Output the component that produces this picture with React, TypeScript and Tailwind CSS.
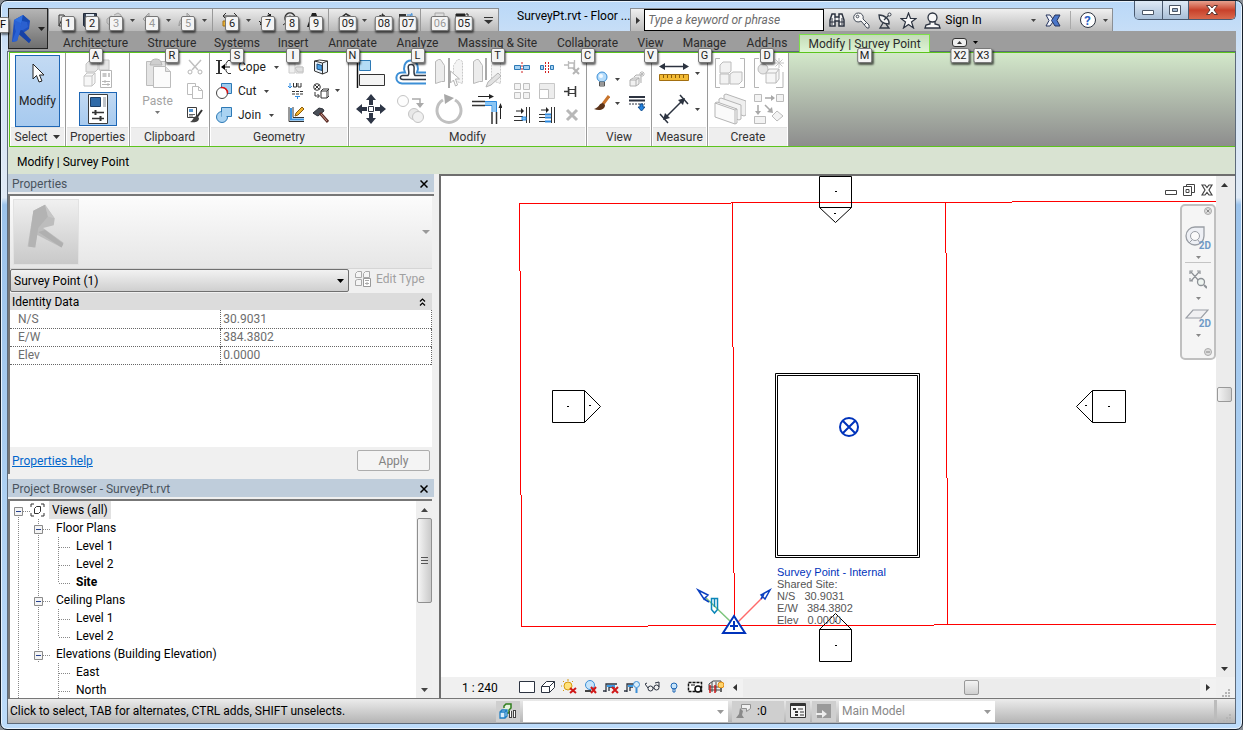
import type { ReactNode } from "react";
import clsx from "clsx";

type IconProps = { w?: number; h?: number; className?: string; children: ReactNode };

function Svg({ w = 16, h = 16, className, children }: IconProps) {
    return (
        <svg width={w} height={h} viewBox={`0 0 ${w} ${h}`} fill="none" aria-hidden="true" className={clsx("shrink-0", className)}>
            {children}
        </svg>
    );
}

function Caret({ className = "text-[#444]" }: { className?: string }) {
    return (
        <Svg w={5} h={3} className={className}>
            <path d="M0 0h5L2.500 3z" fill="currentColor" />
        </Svg>
    );
}

function KeyTip({ label, muted, className }: { label: string; muted?: boolean; className: string }) {
    return (
        <span
            className={clsx(
                "absolute z-30 flex h-[15px] min-w-[14px] -translate-x-1/2 items-center justify-center rounded-[2px] border border-[#777] bg-[#f4f4f4] px-[2px] text-[11px] leading-none shadow-[1px_2px_2px_rgba(0,0,0,0.6)]",
                muted ? "text-[#999]" : "text-[#222]",
                className,
            )}
        >
            {label}
        </span>
    );
}

/* ---------- Application logo ---------- */

function RevitLogo() {
    return (
        <Svg w={24} h={30}>
            <path d="M3 6L12 1l7 6-1 8-6 4 8 7-2 3L8 19l-2 8-5 1z" fill="#1d4fc0" />
            <path d="M3 6L12 1l-2 10-5 7z" fill="#2f6fe0" />
            <path d="M12 1l7 6-4 1-4-1z" fill="#174ab0" />
            <path d="M11 7l5 1 1 5-5 3-4 1z" fill="#2b60cf" />
            <path d="M5 18l6-2 9 10-2 3z" fill="#1742a6" />
            <path d="M3 6l2 11-4 11 5-1 3-9 1-9z" fill="#2a62d4" />
        </Svg>
    );
}

/* ---------- Quick access toolbar ---------- */

const qatIcons: Record<string, ReactNode> = {
    open: <><path d="M1 14V3h5l1 2h5v3" stroke="#333" /><path d="M1 14l3-7h12l-3 7z" fill="#ddd" stroke="#333" /></>,
    save: <><path d="M1.500 1.500h13v13h-12l-1-1z" fill="#3b4658" stroke="#222b3a" /><path d="M4 2h8v6H4z" fill="#dde6f0" /><path d="M5 10h6v4H5z" fill="#fff" /></>,
    sync: <><path d="M1 7l4-3 4 2v5l-4 3-4-3zM8 3l4-2 3 2v5l-4 2" fill="#ccc" stroke="#999" /></>,
    undo: <path d="M1 7l6-6v4c5 0 8 3 8 9-2-4-4-5-8-5v4z" fill="#c4c4c4" stroke="#909090" />,
    redo: <path d="M15 7L9 1v4c-5 0-8 3-8 9 2-4 4-5 8-5v4z" fill="#c4c4c4" stroke="#909090" />,
    measure: <><path d="M1 4h14M4 1L1 4l3 3M12 1l3 3-3 3" stroke="#333" /><path d="M1 9h14v5H1z" fill="#f0b93a" stroke="#a36f10" /></>,
    dim: <><path d="M2 13L13 2M1 9l5 5M10 1l5 5" stroke="#222" /><path d="M2 13l1-4 3 3zM13 2L9 3l3 3z" fill="#222" /></>,
    tag: <><path d="M4 9a5 5 0 1 1 8 0" stroke="#333" strokeWidth="1.500" /><circle cx="8" cy="6" r="2" stroke="#333" /><path d="M1 13l4-3" stroke="#333" /></>,
    text: <path d="M1 15L6 1h4l5 14h-4l-1-3H6l-1 3zM7 9h2L8 5z" fill="#222" />,
    cube: <><path d="M1 8l7-6 7 4v2H9v6H4V8z" fill="#e8e8e8" stroke="#333" /><path d="M1 7l7-5 7 4" stroke="#333" strokeWidth="1.500" /></>,
    section: <><circle cx="8" cy="7" r="4" fill="#ddd" stroke="#333" /><path d="M8 1l6 6-6 2z" fill="#333" /><path d="M1 12l4-3" stroke="#333" /></>,
    thin: <><path d="M1 2h7v3H1zM1 7h7v3H1zM1 12h7v3H1z" fill="#333" /><path d="M9 3h6M9 8h6M14 1l-3 6" stroke="#3b8bd8" /></>,
    hidden: <><path d="M5 1h9v8H5z" fill="#ddd" stroke="#999" /><path d="M2 5h9v8H2z" fill="#eee" stroke="#999" /></>,
    switch: <><path d="M2 2h9v5H2zM6 7h8v6H6z" fill="#f6f6f6" stroke="#222" /><path d="M2 2h9v2H2z" fill="#222" /><path d="M2 8v4h3M14 4V2h-2" stroke="#222" /></>,
};

type QatItem = { icon: keyof typeof qatIcons; tip: string; muted?: boolean; arrow?: boolean; sep?: boolean };

const qatItems: QatItem[] = [
    { icon: "open", tip: "1" },
    { icon: "save", tip: "2" },
    { icon: "sync", tip: "3", muted: true, arrow: true },
    { icon: "undo", tip: "4", muted: true, arrow: true },
    { icon: "redo", tip: "5", muted: true, arrow: true, sep: true },
    { icon: "measure", tip: "6", arrow: true },
    { icon: "dim", tip: "7" },
    { icon: "tag", tip: "8" },
    { icon: "text", tip: "9", sep: true },
    { icon: "cube", tip: "09", arrow: true },
    { icon: "section", tip: "08" },
    { icon: "thin", tip: "07", sep: true },
    { icon: "hidden", tip: "06", muted: true },
    { icon: "switch", tip: "05" },
];

function QuickAccess() {
    return (
        <div className="flex h-[23px] shrink-0 items-center self-end border border-b-0 border-[#8b8f94] bg-linear-to-b from-[#ececec] to-[#b9b9b9] pl-[5px]">
            {qatItems.map((item) => (
                <div key={item.tip} className="flex h-full items-center">
                    <button type="button" aria-label={item.icon} className="relative flex h-full w-6 items-center justify-center">
                        <Svg className={item.muted ? "opacity-80" : ""}>{qatIcons[item.icon]}</Svg>
                        <KeyTip label={item.tip} muted={item.muted} className="top-[7px] left-[14px]" />
                    </button>
                    {item.arrow && (
                        <span className="flex w-3 justify-center">
                            <Caret />
                        </span>
                    )}
                    {item.sep && <span className="mr-[5px] ml-[2px] h-full w-px bg-[#999]" />}
                </div>
            ))}
            <button type="button" aria-label="Customize" className="flex h-full w-[24px] items-center justify-center pl-[4px]">
                <Svg w={9} h={7}>
                    <path d="M0 .5h9" stroke="#333" />
                    <path d="M0 3h9L4.500 7z" fill="#333" />
                </Svg>
            </button>
        </div>
    );
}

/* ---------- Info centre ---------- */

function InfoCenter() {
    return (
        <div className="flex h-[23px] shrink-0 items-center self-end border border-b-0 border-[#8b8f94] bg-linear-to-b from-[#f0f0f0] to-[#bcbcbc]">
            <button type="button" aria-label="Collapse search" className="flex h-full w-[13px] items-center justify-center">
                <Svg w={4} h={7}><path d="M0 0l4 3.500L0 7z" fill="#333" /></Svg>
            </button>
            <input
                type="text"
                aria-label="Search"
                placeholder="Type a keyword or phrase"
                className="h-[22px] w-[180px] border border-black bg-white px-[3px] text-[12px] italic outline-none placeholder:text-[#6b6b6b]"
            />
            <div className="flex items-center gap-[7px] pl-[4px]">
                <button type="button" aria-label="Find">
                    <Svg w={18} h={18}>
                        <path d="M4 3h3v3h4V3h3l2 6v6h-5v-5H7v5H2V9z" fill="#f4f4f4" stroke="#2c3340" strokeWidth="1.500" />
                        <path d="M4 7v7M14 7v7M7 6v4M11 6v4M2 11h5M11 11h5" stroke="#2c3340" />
                    </Svg>
                </button>
                <button type="button" aria-label="Subscription">
                    <Svg w={17} h={17}>
                        <path d="M5.500 1a4.500 4.500 0 1 0 2.500 8l6 7h2v-3l-6-6A4.500 4.500 0 0 0 5.500 1z" fill="#f7f7f7" stroke="#444c58" />
                        <circle cx="4.500" cy="4.500" r="1.300" stroke="#444c58" />
                        <path d="M11 13l2-2" stroke="#444c58" />
                    </Svg>
                </button>
                <button type="button" aria-label="Communication">
                    <Svg w={16} h={17}>
                        <path d="M2 3c0 6 4 9 10 9C13 8 8 3 2 3z" fill="#f5f5f5" stroke="#333b47" strokeWidth="1.300" />
                        <path d="M7 8l5-5M6 11l-3 5h9l-3-4" stroke="#333b47" strokeWidth="1.300" />
                        <circle cx="12.500" cy="2.500" r="1.500" fill="#fff" stroke="#333b47" />
                    </Svg>
                </button>
                <button type="button" aria-label="Favorites">
                    <Svg w={17} h={17}>
                        <path d="M8.500 1l2 5.500h5.500l-4.500 3.500 2 6-5-3.500-5 3.500 2-6L1 6.500h5.500z" fill="#f8f8f8" stroke="#2c3340" strokeWidth="1.200" />
                    </Svg>
                </button>
                <button type="button" className="flex items-center gap-[4px] text-[12px] whitespace-nowrap">
                    <Svg w={17} h={17}>
                        <path d="M6 9v3l-4 1-1 3h15l-1-3-4-1V9" fill="#f8f8f8" stroke="#2c3340" strokeWidth="1.300" />
                        <circle cx="8.500" cy="5.500" r="4.500" fill="#f8f8f8" stroke="#2c3340" strokeWidth="1.300" />
                    </Svg>
                    Sign In
                </button>
            </div>
            <span className="ml-[49px]"><Caret /></span>
            <button type="button" aria-label="Exchange Apps" className="ml-[9px]">
                <Svg w={16} h={13}>
                    <path d="M1 1h4l4 5.500L5 12H1l3-5.500z" fill="#f1f4fb" stroke="#26345f" />
                    <path d="M15 1h-5L6.500 6.500 10 12h5l-3-5.500z" fill="#4a76c9" stroke="#26345f" />
                </Svg>
            </button>
            <span className="mx-[9px] h-[18px] w-px bg-[#aaa]" />
            <button type="button" aria-label="Help">
                <span className="flex size-[16px] items-center justify-center rounded-full border border-[#2c3340] bg-white text-[13px] leading-none font-bold text-[#2b62c4]">?</span>
            </button>
            <span className="mr-[4px] ml-[7px]"><Caret /></span>
        </div>
    );
}

function WindowButtons() {
    return (
        <div className="flex h-[19px] shrink-0 overflow-hidden rounded-b-[5px] border border-t-0 border-[#4a5a70]">
            <button type="button" aria-label="Minimize" className="flex w-[28px] items-center justify-center border-r border-[#4a5a70] bg-linear-to-b from-[#dfeaf6] to-[#a9bfd8] pt-[5px]">
                <Svg w={12} h={5}><path d="M.5.5h11v4H.5z" fill="#fff" stroke="#4b5666" /></Svg>
            </button>
            <button type="button" aria-label="Maximize" className="flex w-[26px] items-center justify-center border-r border-[#4a5a70] bg-linear-to-b from-[#dfeaf6] to-[#a9bfd8]">
                <Svg w={12} h={10}><path d="M.5.5h11v9H.5z" fill="#fff" stroke="#4b5666" /><path d="M3.500 3.500h5v3h-5z" fill="#9fb6d0" stroke="#4b5666" /></Svg>
            </button>
            <button type="button" aria-label="Close" className="flex w-[46px] items-center justify-center bg-linear-to-b from-[#e6a08e] via-[#c8402a] to-[#d9694d]">
                <Svg w={12} h={10}><path d="M.5.5h3.500l2 2.500 2-2.500h3.500L8 5l3.500 4.500H8L6 7 4 9.500H.5L4 5z" fill="#fff" stroke="#5c3630" /></Svg>
            </button>
        </div>
    );
}

/* ---------- Ribbon tabs ---------- */

const tabs = [
    { label: "Architecture", tip: "A", width: "w-[85px]" },
    { label: "Structure", tip: "R", width: "w-[68px]" },
    { label: "Systems", tip: "S", width: "w-[62px]" },
    { label: "Insert", tip: "I", width: "w-[50px]" },
    { label: "Annotate", tip: "N", width: "w-[69px]" },
    { label: "Analyze", tip: "L", width: "w-[61px]" },
    { label: "Massing & Site", tip: "T", width: "w-[99px]" },
    { label: "Collaborate", tip: "C", width: "w-[81px]" },
    { label: "View", tip: "V", width: "w-[45px]" },
    { label: "Manage", tip: "G", width: "w-[63px]" },
    { label: "Add-Ins", tip: "D", width: "w-[62px]" },
];

function RibbonTabs() {
    return (
        <nav className="col-span-2 col-start-1 row-start-2 flex bg-[#9d9d9d] pl-[45px] text-[#2b2b2b]">
            {tabs.map((tab) => (
                <button key={tab.tip} type="button" className={clsx("relative pt-[3px] whitespace-nowrap", tab.width)}>
                    {tab.label}
                    <KeyTip label={tab.tip} className="top-[17px] left-1/2" />
                </button>
            ))}
            <button type="button" className="relative mt-[3px] ml-px w-[131px] border border-b-0 border-[#7de04a] bg-linear-to-b from-[#c4dcb8] to-[#def4d4] whitespace-nowrap">
                Modify | Survey Point
                <KeyTip label="M" className="top-[13px] left-1/2" />
            </button>
            <div className="flex items-center gap-[6px] pt-[2px] pl-[22px]">
                <button type="button" aria-label="Minimize ribbon" className="relative flex h-[9px] w-[15px] items-center justify-center rounded-[3px] border border-[#333] bg-[#eee]">
                    <Svg w={5} h={3}><path d="M0 3h5L2.500 0z" fill="#333" /></Svg>
                    <KeyTip label="X2" className="top-[9px] left-[7px]" />
                </button>
                <button type="button" aria-label="Ribbon options" className="relative flex h-[9px] items-center">
                    <Caret className="text-black" />
                    <KeyTip label="X3" className="top-[10px] left-[10px]" />
                </button>
            </div>
        </nav>
    );
}

/* ---------- Ribbon panels ---------- */

function Panel({ title, width, children, caret }: { title: string; width: string; children: ReactNode; caret?: boolean }) {
    return (
        <section className={clsx("flex shrink-0 flex-col border-r border-[#9a9a9a] bg-white px-px", width)}>
            <div className="flex h-[75px]">{children}</div>
            <h2 className="flex flex-1 items-center justify-center gap-[6px] border-t border-[#e2e2e2] bg-[#eeeeee] text-[#333]">
                {title}
                {caret && <Svg w={7} h={4}><path d="M0 0h7L3.500 4z" fill="#333" /></Svg>}
            </h2>
        </section>
    );
}

function Tool({ label, className, children }: { label: string; className?: string; children: ReactNode }) {
    return (
        <button type="button" aria-label={label} className={clsx("flex items-center justify-center", className)}>
            {children}
        </button>
    );
}

function SelectPanel() {
    return (
        <Panel title="Select" width="w-[56px]" caret>
            <button type="button" className="mx-auto mt-[2px] flex h-[72px] w-[45px] flex-col items-center border border-[#1d66b5] bg-linear-to-b from-[#c3daf3] to-[#a7caef] text-[#222]">
                <Svg w={14} h={22} className="mt-[7px]">
                    <path d="M2 1v15l3.500-3.500L8 19l3-1-2.500-6H13z" fill="#fff" stroke="#222" />
                </Svg>
                <span className="mt-[7px]">Modify</span>
            </button>
        </Panel>
    );
}

function PropertiesPanel() {
    return (
        <Panel title="Properties" width="w-[64px]">
            <div className="flex w-full flex-col items-center">
                <Tool label="Type Properties" className="h-[39px]">
                    <Svg w={30} h={30}>
                        <path d="M1 18l3-3h8v10l-3 3H1zM1 18h8v10M9 18l3-3" fill="#f7f7f7" stroke="#c4c4c4" />
                        <path d="M3 6l4-4h8v9l-3 3H3zM16 6l4-4h6v10H16z" fill="#e6e6e6" stroke="#c4c4c4" />
                        <path d="M17.500 12.500h11v17h-11z" fill="#fff" stroke="#b5b5b5" />
                        <path d="M19.500 15h4v4h-4zM25 15h2v4h-2z" fill="#c8c8c8" />
                        <path d="M19 23.500h8M19 26.500h8M22 22v3M25 25v3" stroke="#b5b5b5" />
                    </Svg>
                </Tool>
                <Tool label="Properties" className="h-[34px] w-[38px] border border-[#1d66b5] bg-linear-to-b from-[#c3daf3] to-[#a7caef]">
                    <Svg w={22} h={30}>
                        <path d="M1.500.5h19v29h-19z" fill="#fff" stroke="#3c3c3c" />
                        <path d="M3.500 3.500h10v9h-10z" fill="#2f6aa8" stroke="#1c3e66" />
                        <path d="M16 3h3v10h-3z" fill="#c0c4ca" />
                        <path d="M5 18.500h12M5 24.500h12" stroke="#333" strokeWidth="1.500" />
                        <path d="M8.500 16v5M13.500 22v5" stroke="#333" strokeWidth="2" />
                    </Svg>
                </Tool>
            </div>
        </Panel>
    );
}

function ClipboardPanel() {
    return (
        <Panel title="Clipboard" width="w-[80px]">
            <button type="button" className="flex w-[53px] flex-col items-center pt-[5px] text-[#a3a3a3]">
                <Svg w={28} h={31}>
                    <path d="M2.500 3.500h19v24h-19z" fill="#e4e4e4" stroke="#bcbcbc" />
                    <path d="M7 4c1-4 9-4 10 0l1 3H6z" fill="#cfcfcf" stroke="#b5b5b5" />
                    <path d="M9.500 8.500h12l5 5v16h-17z" fill="#fbfbfb" stroke="#bcbcbc" />
                    <path d="M21.500 8.500v5h5" fill="#e4e4e4" stroke="#bcbcbc" />
                </Svg>
                <span className="mt-[5px] leading-[14px]">Paste</span>
                <Caret className="mt-[3px] text-[#777]" />
            </button>
            <div className="flex flex-col pt-[2px] pl-[3px]">
                <Tool label="Cut to Clipboard" className="h-6">
                    <Svg>
                        <path d="M2 1l9 10M14 1L5 11" stroke="#c0c0c0" strokeWidth="1.500" />
                        <circle cx="3" cy="13" r="2" stroke="#b5b5b5" /><circle cx="13" cy="13" r="2" stroke="#b5b5b5" />
                    </Svg>
                </Tool>
                <Tool label="Copy to Clipboard" className="h-6">
                    <Svg>
                        <path d="M.5.5h8v11h-8z" fill="#fff" stroke="#bcbcbc" />
                        <path d="M5.500 3.500h6l4 4v8h-10zM11.500 3.500v4h4" fill="#fff" stroke="#bcbcbc" />
                    </Svg>
                </Tool>
                <Tool label="Match Type Properties" className="h-6">
                    <Svg>
                        <path d="M.5.5h9v10h-9z" fill="#fff" stroke="#3c3c3c" />
                        <path d="M2 2h4v3H2z" fill="#5596d2" /><path d="M2 7.500h6M2 9h4" stroke="#666" />
                        <path d="M15 3l-5 7" stroke="#333" strokeWidth="2" />
                        <path d="M10 9c-4 0-3 4-7 6 5 1 9 0 9-4z" fill="#444" />
                    </Svg>
                </Tool>
            </div>
        </Panel>
    );
}

const geometryRows = [
    {
        label: "Cope",
        icon: <><path d="M0 1.500h6M0 14.500h6" stroke="#333" /><path d="M3 1v14" stroke="#333" strokeWidth="2" /><path d="M15 1.500h-3l-2 3v2M10 10v2l2 2.500h3" stroke="#333" /><path d="M14 8H8" stroke="#000" /><path d="M5 8l4-3v6z" fill="#000" /></>,
    },
    {
        label: "Cut",
        icon: <><path d="M5.500.5h10v10h-10z" fill="#9fcdf0" stroke="#2d79b5" /><circle cx="6" cy="10" r="5.500" fill="#fff" stroke="#444" /><path d="M5 4.500a5.500 5.500 0 0 1 6.500 6" stroke="#e01010" strokeWidth="1.500" /></>,
    },
    {
        label: "Join",
        icon: <><circle cx="6" cy="10" r="5.500" fill="#a9d3f2" stroke="#2d79b5" /><path d="M5.500.5h10v9h-10z" fill="#a9d3f2" stroke="#2d79b5" /><path d="M6.500 5v4h4" stroke="#a9d3f2" strokeWidth="2" /></>,
    },
];

function GeometryPanel() {
    return (
        <Panel title="Geometry" width="w-[139px]">
            <div className="flex w-[72px] flex-col pt-[2px] pl-[5px] text-[#222]">
                {geometryRows.map((row) => (
                    <button key={row.label} type="button" className="flex h-6 items-center gap-[6px]">
                        <Svg>{row.icon}</Svg>
                        {row.label}
                        <Caret className="ml-[2px] text-[#444]" />
                    </button>
                ))}
            </div>
            <div className="flex w-[25px] flex-col pt-[2px]">
                <Tool label="Wall Opening" className="h-6">
                    <Svg><path d="M1 4h6v10H1zM8 8h7v6H8z" fill="#efefef" stroke="#ccc" /><path d="M7 9l3 4h5V8h-6z" fill="#e0e0e0" stroke="#c4c4c4" /></Svg>
                </Tool>
                <Tool label="Beam Joins" className="h-6">
                    <Svg>
                        <path d="M2 0v5M0 3l2 2 2-2M9.500 16v-3M7 13.500h5" stroke="#2d8ae0" />
                        <path d="M5.500 0v4h3v-4M10 0v4h3V0" stroke="#333" /><path d="M4 8.500h12M4 11h12" stroke="#333" strokeDasharray="3 1" />
                    </Svg>
                </Tool>
                <Tool label="Wall Joins" className="h-6">
                    <Svg>
                        <path d="M1 0v14.500h15M5 0v10.500h11" stroke="#333" />
                        <path d="M3 1v11.500h13" stroke="#3b94e0" strokeWidth="2" />
                        <path d="M7 9l1-3 6-6 2 2-6 6z" fill="#f2b431" stroke="#8a5c0a" />
                    </Svg>
                </Tool>
            </div>
            <div className="flex w-[25px] flex-col pt-[2px]">
                <Tool label="Split Face" className="h-6">
                    <Svg>
                        <path d="M1.500 2l8 2 5-2v11l-5 2-8-3z" fill="#e8f0f7" stroke="#333" />
                        <path d="M4 5l5 1.500v5L4 10z" fill="#4aa0e4" stroke="#1c4f80" /><path d="M9.500 4v11M1.500 2l5-1 8 1" stroke="#333" />
                    </Svg>
                </Tool>
                <Tool label="Unjoin" className="h-6">
                    <Svg>
                        <circle cx="4" cy="4" r="3.300" stroke="#333" /><path d="M2 2l4 4M6 2L2 6M2 9v4h4M4.500 11l2 2-2 2" stroke="#333" />
                        <path d="M8 8l2-2h6v7l-2 2H8zM8 8h6v7M14 8l2-2" fill="#fff" stroke="#333" />
                    </Svg>
                </Tool>
                <Tool label="Demolish" className="h-6">
                    <Svg>
                        <path d="M0 6l6-5 4 1 1 2-6 5-2-1z" fill="#4a4f58" stroke="#2b2f36" />
                        <path d="M7 6l8 9" stroke="#5b2e28" strokeWidth="3" /><path d="M8 7l6 7" stroke="#cf9a8e" />
                    </Svg>
                </Tool>
            </div>
            <div className="flex flex-col justify-center pl-[2px]">
                <Caret />
            </div>
        </Panel>
    );
}

function ModifyPanel() {
    return (
        <Panel title="Modify" width="w-[238px]">
            <div className="grid grid-cols-[41px_39px_37px_40px] grid-rows-[36px_36px] pt-[2px]">
                <Tool label="Align">
                    <Svg w={30} h={32}>
                        <path d="M1.500 1v30" stroke="#111" strokeWidth="1.500" />
                        <path d="M3.500 3.500h11v10h-11z" fill="#b4dbf5" stroke="#2d79b5" />
                        <path d="M3.500 17.500h25v11h-25z" fill="#f4f4f4" stroke="#333" />
                    </Svg>
                </Tool>
                <Tool label="Offset">
                    <Svg w={32} h={30}>
                        <path d="M31 25.500H7c-8-1-7-11 0-11h3c-2-4-1-12 6-12s8 8 6 12h9" stroke="#3c8fd6" strokeWidth="2" />
                        <path d="M31 21.500H8c-4 0-3-4 0-4h5c3-3-3-11 3-11s1 8 4 11h11" stroke="#333b47" strokeWidth="1.500" />
                    </Svg>
                </Tool>
                <Tool label="Mirror - Pick Axis">
                    <Svg w={30} h={30}>
                        <path d="M1.500 3.500l3-2h2l4 6v16h-3l-6 2z" fill="#ececec" stroke="#b8b8b8" />
                        <path d="M28.500 3.500l-3-2h-2l-4 6v16h3l6 2z" fill="#f4f4f4" stroke="#c8c8c8" strokeDasharray="2 1" />
                        <path d="M15 0v30" stroke="#a8a8a8" strokeWidth="2" />
                        <path d="M16.500 13v12l3-3 2 6 2-1-2-6h4z" fill="#fff" stroke="#b5b5b5" />
                    </Svg>
                </Tool>
                <Tool label="Mirror - Draw Axis">
                    <Svg w={30} h={30}>
                        <path d="M1.500 3.500l3-2h2l4 6v16h-3l-6 2z" fill="#ececec" stroke="#b8b8b8" />
                        <path d="M28.500 3.500l-3-2h-2l-4 6v16h3l6 2z" fill="#f4f4f4" stroke="#c8c8c8" strokeDasharray="2 1" />
                        <path d="M14 0v22" stroke="#a8a8a8" strokeWidth="2" />
                        <path d="M14 29l2-5 10-9 3 3-10 9z" fill="#e2e2e2" stroke="#b5b5b5" />
                    </Svg>
                </Tool>
                <Tool label="Move">
                    <Svg w={30} h={30}>
                        <path d="M15 0l5 6h-3v5h-4V6h-3zM15 30l-5-6h3v-5h4v5h3zM0 15l6-5v3h5v4H6v3zM30 15l-6 5v-3h-5v-4h5v-3z" fill="#2e3646" />
                        <path d="M12.500 12.500h5v5h-5z" fill="#fff" stroke="#2e3646" />
                    </Svg>
                </Tool>
                <Tool label="Copy">
                    <Svg w={30} h={30}>
                        <circle cx="7" cy="7" r="5.500" fill="#fdfdfd" stroke="#c4c4c4" />
                        <path d="M16 5h8v6" stroke="#aaa" strokeWidth="1.500" /><path d="M20 9h8l-4 5z" fill="#aaa" />
                        <circle cx="18" cy="20" r="5.500" fill="#e8e8e8" stroke="#c4c4c4" /><circle cx="22" cy="23" r="5.500" fill="#f0f0f0" stroke="#c4c4c4" />
                    </Svg>
                </Tool>
                <Tool label="Rotate">
                    <Svg w={30} h={32}>
                        <path d="M9 7a12 12 0 1 0 12 0" stroke="#c0c0c0" strokeWidth="3" />
                        <path d="M10 1l10 4-9 6z" fill="#a8a8a8" />
                    </Svg>
                </Tool>
                <Tool label="Trim/Extend to Corner">
                    <Svg w={30} h={30}>
                        <path d="M0 7.500h13M0 11.500h13M20 18v12M24.500 18v12" stroke="#333" strokeWidth="1.500" />
                        <path d="M13 9.500h9.500V18" stroke="#8cc6f3" strokeWidth="4" />
                        <path d="M13 7.500h11.500V18M13 11.500h7V18" stroke="#2d8ae0" />
                        <path d="M6 2.500h13M28.500 25V14" stroke="#222" /><path d="M22 2.500L17 0v5zM28.500 9l-2 5h4z" fill="#222" />
                    </Svg>
                </Tool>
            </div>
            <div className="grid grid-cols-[25px_25px_25px] grid-rows-[24px_24px_24px] pt-[2px] pl-[2px]">
                <Tool label="Split Element">
                    <Svg><path d="M.5 6.500h6v4h-6zM9.500 6.500h6v4h-6z" fill="#a6d2f3" stroke="#2d79b5" /><path d="M8 3v11" stroke="#d02020" strokeDasharray="2 1" /></Svg>
                </Tool>
                <Tool label="Split with Gap">
                    <Svg><path d="M1.500 6.500h3v4h-3zM11.500 6.500h3v4h-3z" fill="#a6d2f3" stroke="#2d79b5" /><path d="M6.500 3v11M9.500 3v11" stroke="#d02020" strokeDasharray="2 1" /></Svg>
                </Tool>
                <Tool label="Unpin">
                    <Svg><path d="M0 6h4M4.500 2v8M5 4h5v5H5M10.500 1v10" stroke="#bbb" strokeWidth="1.300" /><path d="M9 9l6 6M15 9l-6 6" stroke="#b5b5b5" strokeWidth="2" /></Svg>
                </Tool>
                <Tool label="Array">
                    <Svg><path d="M.5.5h6v6h-6zM9.500.5h6v6h-6zM.5 9.500h6v6h-6zM9.500 9.500h6v6h-6z" fill="#f3f3f3" stroke="#c0c0c0" /></Svg>
                </Tool>
                <Tool label="Scale">
                    <Svg><path d="M.5.5h15v15h-15z" fill="#ededed" stroke="#c8c8c8" /><path d="M.5 6.500h9v9h-9z" fill="#fff" stroke="#c0c0c0" /></Svg>
                </Tool>
                <Tool label="Pin">
                    <Svg><path d="M0 8.500h4M4.500 4v9M11.500 3v11" stroke="#3a3a3a" strokeWidth="1.500" /><path d="M5 6.500h6v4H5z" fill="#fff" stroke="#3a3a3a" /></Svg>
                </Tool>
                <Tool label="Trim/Extend Single">
                    <Svg><path d="M0 9.500h9M0 13.500h9M12.500 0v16M15.500 0v16" stroke="#333" /><path d="M8 10h4v3H8z" fill="#7fc0f2" stroke="#2d8ae0" /><path d="M2 4h7" stroke="#222" /><path d="M10 4L7 1v6z" fill="#222" /></Svg>
                </Tool>
                <Tool label="Trim/Extend Multiple">
                    <Svg><path d="M0 7.500h9M0 10.500h9M0 14.500h9M12.500 0v16M15.500 0v16" stroke="#333" /><path d="M6 7.500h6M6 10.500h6M6 14.500h6" stroke="#2d8ae0" strokeWidth="2" /><path d="M2 3h7" stroke="#222" /><path d="M10 3L7 0v6z" fill="#222" /></Svg>
                </Tool>
                <Tool label="Delete">
                    <Svg w={14} h={14}><path d="M2 2l10 10M12 2L2 12" stroke="#b8b8b8" strokeWidth="3" /></Svg>
                </Tool>
            </div>
        </Panel>
    );
}

function ViewPanel() {
    return (
        <Panel title="View" width="w-[65px]">
            <div className="grid grid-cols-[27px_8px_28px] grid-rows-[24px_24px] items-center pt-[14px]">
                <Tool label="Hide in View">
                    <Svg w={14} h={17}><circle cx="7" cy="6" r="5" fill="#b5dcfb" stroke="#3c8fd6" /><circle cx="6" cy="5" r="2" fill="#f2faff" /><path d="M4.500 11h5v4h-5zM4.500 13h5" fill="#ddd" stroke="#555" /></Svg>
                </Tool>
                <Caret />
                <Tool label="Displace Elements">
                    <Svg><path d="M1 9l3-2h6v6l-3 2H1zM5 6l2-2h5v8M1 9h6v6M7 9l3-2" fill="#f1f1f1" stroke="#b0b0b0" /><path d="M13 0v6M10 3h6M11 1l4 4M15 1l-4 4" stroke="#bbb" /></Svg>
                </Tool>
                <Tool label="Override Graphics">
                    <Svg><path d="M15 1l-6 8" stroke="#c8742c" strokeWidth="3" /><path d="M9 8c-4 0-3 4-9 6 5 2 11 1 11-4z" fill="#5b3319" /></Svg>
                </Tool>
                <Caret />
                <Tool label="Linework">
                    <Svg><path d="M0 2h16M0 5.500h16" stroke="#2c3340" strokeWidth="2" /><path d="M0 9h16" stroke="#2c3340" strokeDasharray="2 1" /><path d="M11 9h3v3h2l-3.500 4L9 12h2z" fill="#2383e0" stroke="#124f90" /></Svg>
                </Tool>
            </div>
        </Panel>
    );
}

function MeasurePanel() {
    return (
        <Panel title="Measure" width="w-[56px]">
            <div className="grid grid-cols-[42px_8px] grid-rows-[36px_36px] items-center pt-[2px]">
                <Tool label="Measure">
                    <Svg w={30} h={22}>
                        <path d="M3 4.500h24" stroke="#2c3340" strokeWidth="1.500" /><path d="M0 4.500L6 1v7zM30 4.500L24 1v7z" fill="#2c3340" />
                        <path d="M.5 12.500h29v6H.5z" fill="#f3bb35" stroke="#a36f10" /><path d="M4.500 13v3M8.500 13v3M12.500 13v3M16.500 13v3M20.500 13v3M24.500 13v3" stroke="#8a5c0a" />
                    </Svg>
                </Tool>
                <Caret />
                <Tool label="Aligned Dimension">
                    <Svg w={30} h={30}><path d="M5 25L25 5M1 20l8 9M21 1l8 9" stroke="#2c3340" strokeWidth="1.500" /><path d="M4 26l2-7 5 5zM26 4l-7 2 5 5z" fill="#2c3340" /></Svg>
                </Tool>
                <Caret />
            </div>
        </Panel>
    );
}

function CreatePanel() {
    return (
        <Panel title="Create" width="w-[81px]">
            <div className="grid grid-cols-[41px_37px] grid-rows-[36px_36px] pt-[2px]">
                <Tool label="Create Assembly">
                    <Svg w={30} h={30}>
                        <path d="M5 .5H.5v29H5M25 .5h4.500v29H25" stroke="#b5b5b5" />
                        <path d="M5 7l3-3h8v9l-2 2H5zM5 16h9v10H5zM15 16l3-2h9v9l-3 3h-9z" fill="#f2f2f2" stroke="#bcbcbc" />
                    </Svg>
                </Tool>
                <Tool label="Create Group">
                    <Svg w={30} h={30}>
                        <path d="M5 .5H.5v29H5M22 29.500h7V14" stroke="#b5b5b5" />
                        <circle cx="9" cy="11" r="5" fill="#e6e6e6" stroke="#bcbcbc" /><path d="M12 15l3-4h10v10l-3 4H12zM12 15h10v10M22 15l3-4" fill="#f6f6f6" stroke="#bcbcbc" />
                        <path d="M25 0v10M20 5h10M21.500 1.500l7 7M28.500 1.500l-7 7" stroke="#c4c4c4" />
                    </Svg>
                </Tool>
                <Tool label="Create Parts">
                    <Svg w={32} h={32}>
                        <path d="M10 2l2-1 20 7v14l-2 1-20-7z" fill="#efefef" stroke="#b5b5b5" />
                        <path d="M5 6l2-1 20 7v14l-2 1-20-7z" fill="#f4f4f4" stroke="#b5b5b5" />
                        <path d="M1 10l2-1 20 7v14l-2 1-20-7z" fill="#fafafa" stroke="#b5b5b5" /><path d="M1 10l20 7v14M21 17l2-1" stroke="#b5b5b5" />
                    </Svg>
                </Tool>
                <Tool label="Create Similar">
                    <Svg w={30} h={30}>
                        <path d="M.5.5h7v7h-7zM22.500.5h7v7h-7zM.5 22.500h11v7H.5zM23 17l6 5-6 5-5-5z" fill="#f3f3f3" stroke="#bcbcbc" />
                        <path d="M11 4h7M4 11v7M11 11l6 6" stroke="#a8a8a8" strokeWidth="1.500" /><path d="M21 4l-4-3v6zM4 21l-3-4h6zM19 19l-1-6-5 5z" fill="#a8a8a8" />
                    </Svg>
                </Tool>
            </div>
        </Panel>
    );
}

function Ribbon() {
    return (
        <div className="ml-px flex h-[95px] shrink-0 border-y border-l border-[#5cc41c] bg-linear-to-b from-[#d3e8ca] to-[#8d8d8d]">
            <SelectPanel />
            <PropertiesPanel />
            <ClipboardPanel />
            <GeometryPanel />
            <ModifyPanel />
            <ViewPanel />
            <MeasurePanel />
            <CreatePanel />
        </div>
    );
}

/* ---------- Docked palettes ---------- */

function DockTitle({ title }: { title: string }) {
    return (
        <div className="flex h-[18px] shrink-0 items-center justify-between bg-[#bfcddb] pt-px pr-[6px] pl-[4px] text-[#4a545e]">
            <h2>{title}</h2>
            <button type="button" aria-label={`Close ${title}`}>
                <Svg w={8} h={8}><path d="M.5.5l7 7M7.500.5l-7 7" stroke="#000" strokeWidth="1.500" /></Svg>
            </button>
        </div>
    );
}

const identityData = [
    { name: "N/S", value: "30.9031" },
    { name: "E/W", value: "384.3802" },
    { name: "Elev", value: "0.0000" },
];

function PropertiesPalette() {
    return (
        <section className="flex h-[300px] shrink-0 flex-col">
            <DockTitle title="Properties" />
            <div className="mt-[2px] flex min-h-0 flex-1 flex-col border-t-2 border-l-2 border-[#777] bg-[#f0f0f0] pr-[2px]">
                <button type="button" aria-label="Type selector" className="flex h-[73px] shrink-0 items-center justify-between border-b border-[#d5d5d5] bg-linear-to-b from-[#fcfcfc] to-[#e6e6e6] pr-[2px] pl-[3px]">
                    <Svg w={66} h={66} className="border border-[#e2e2e2] bg-linear-to-b from-[#f0f0f0] to-[#c9c9c9]">
                        <path d="M20 11l12-6 10 14-1 7-11 3 21 15-2 5-25-13-3 13-7-1z" fill="#bdbdbd" />
                        <path d="M20 11l12-6 3 12-10 12-3 20-7-1z" fill="#b3b3b3" />
                        <path d="M25 33l7-2 19 14-2 4z" fill="#b0b0b0" />
                        <path d="M32 5l3 12 7 2z" fill="#c6c6c6" />
                    </Svg>
                    <Svg w={8} h={4}><path d="M0 0h8L4 4z" fill="#999" /></Svg>
                </button>
                <div className="flex h-[24px] shrink-0 items-start gap-[6px]">
                    <div className="relative min-w-0 flex-1">
                        <select aria-label="Category filter" className="block h-[23px] w-full appearance-none rounded-[2px] border border-[#707070] bg-linear-to-b from-[#f2f2f2] to-[#cfcfcf] px-[3px] text-black">
                            <option>Survey Point (1)</option>
                        </select>
                        <Svg w={7} h={4} className="pointer-events-none absolute top-[10px] right-[5px]"><path d="M0 0h7L3.500 4z" fill="#000" /></Svg>
                    </div>
                    <button type="button" className="flex h-[20px] w-[77px] shrink-0 items-center gap-[5px] whitespace-nowrap text-[#a0a0a0]">
                        <Svg>
                            <path d="M.5 2.500l2-2h4v6h-6zM8.500 2.500l2-2h4v6h-6zM.5 9.500l2-1h4v6h-6z" fill="#f4f4f4" stroke="#a8a8a8" />
                            <path d="M8.500 7.500h7v8h-7z" fill="#fff" stroke="#999" /><path d="M10 9.500h4M10 12.500h4M12 11v3" stroke="#aaa" />
                        </Svg>
                        Edit Type
                    </button>
                </div>
                <div className="flex h-[17px] shrink-0 items-center justify-between bg-[#dcdcdc] pr-[6px] pl-[2px] text-black">
                    <h3>Identity Data</h3>
                    <Svg w={7} h={8}><path d="M1 3.500L3.500 1 6 3.500M1 7.500L3.500 5 6 7.500" stroke="#000" strokeWidth="1.200" /></Svg>
                </div>
                <div className="min-h-0 flex-1 bg-white">
                    <table className="w-full table-fixed border-collapse text-[#6d6d6d]">
                        <tbody>
                            {identityData.map((row) => (
                                <tr key={row.name} className="h-[18px] border-b border-dotted border-[#666] leading-[16px]">
                                    <th scope="row" className="border-r border-dotted border-[#666] p-0 pl-[8px] text-left font-normal">{row.name}</th>
                                    <td className="border-r border-dotted border-[#666] p-0 pl-[2px]">{row.value}</td>
                                </tr>
                            ))}
                        </tbody>
                    </table>
                </div>
                <div className="flex h-[27px] shrink-0 items-center justify-between pr-[2px] pl-[2px]">
                    <a href="#help" className="text-[#0066cc] underline">Properties help</a>
                    <button type="button" className="h-[21px] w-[73px] rounded-[2px] border border-[#adadad] bg-[#f4f4f4] text-[#838383]">Apply</button>
                </div>
            </div>
        </section>
    );
}

type Gutter = "line" | "tee" | "end" | "box" | "first" | "none";

const treeRows: { gutters: Gutter[]; label: string; bold?: boolean; root?: boolean }[] = [
    { gutters: ["first"], label: "Views (all)", root: true },
    { gutters: ["line", "box"], label: "Floor Plans" },
    { gutters: ["line", "line", "tee"], label: "Level 1" },
    { gutters: ["line", "line", "tee"], label: "Level 2" },
    { gutters: ["line", "line", "end"], label: "Site", bold: true },
    { gutters: ["line", "box"], label: "Ceiling Plans" },
    { gutters: ["line", "line", "tee"], label: "Level 1" },
    { gutters: ["line", "line", "end"], label: "Level 2" },
    { gutters: ["line", "box"], label: "Elevations (Building Elevation)" },
    { gutters: ["line", "none", "tee"], label: "East" },
    { gutters: ["line", "none", "tee"], label: "North" },
];

function TreeGutter({ kind }: { kind: Gutter }) {
    const box = kind === "box" || kind === "first";
    return (
        <Svg w={20} h={18}>
            {kind !== "none" && (
                <path
                    d={kind === "end" ? "M8.500 0V10" : kind === "first" ? "M8.500 10V18" : "M8.500 0V18"}
                    stroke="#888"
                    strokeDasharray="1 1"
                />
            )}
            {(box || kind === "tee" || kind === "end") && <path d="M9 10.500h14" stroke="#888" strokeDasharray="1 1" />}
            {box && (
                <>
                    <path d="M4.500 6.500h8v8h-8z" fill="#f4f4f4" stroke="#8a8a8a" />
                    <path d="M6 10.500h5" stroke="#26418f" />
                </>
            )}
        </Svg>
    );
}

function ProjectBrowser() {
    return (
        <section className="mt-[5px] flex min-h-0 flex-1 flex-col">
            <DockTitle title="Project Browser - SurveyPt.rvt" />
            <div className="mt-[2px] mr-[2px] flex min-h-0 flex-1 border-t-2 border-l-2 border-[#777] bg-white">
                <ul role="tree" className="min-w-0 flex-1 overflow-hidden text-black">
                    {treeRows.map((row, i) => (
                        <li key={i} role="treeitem" className="flex h-[18px] items-center whitespace-nowrap">
                            {row.gutters.map((kind, g) => <TreeGutter key={g} kind={kind} />)}
                            {row.root && (
                                <Svg w={15} h={14}>
                                    <path d="M1 4V1h3M11 1h3v3M14 10v3h-3M4 13H1v-3" stroke="#333" />
                                    <path d="M4.500 5.500l2-2h4v5l-2 2h-4z" fill="#fff" stroke="#333" />
                                </Svg>
                            )}
                            <span className={clsx(row.root ? "ml-[4px] bg-[#e1e1e1] px-[3px] leading-[18px]" : "ml-[6px]", row.bold && "font-bold")}>{row.label}</span>
                        </li>
                    ))}
                </ul>
                <div className="flex w-[16px] shrink-0 flex-col items-center bg-[#efefef]">
                    <button type="button" aria-label="Scroll up" className="flex h-[17px] w-full items-center justify-center">
                        <Svg w={7} h={4}><path d="M0 4h7L3.500 0z" fill="#444" /></Svg>
                    </button>
                    <div className="flex h-[85px] w-[15px] items-center justify-center rounded-[2px] border border-[#8f8f8f] bg-linear-to-r from-[#f5f5f5] to-[#cacaca]">
                        <Svg w={7} h={8}><path d="M0 .5h7M0 3.500h7M0 6.500h7" stroke="#555" /></Svg>
                    </div>
                    <div className="flex-1" />
                    <button type="button" aria-label="Scroll down" className="flex h-[17px] w-full items-center justify-center">
                        <Svg w={7} h={4}><path d="M0 0h7L3.500 4z" fill="#444" /></Svg>
                    </button>
                </div>
            </div>
        </section>
    );
}

/* ---------- Drawing area ---------- */

function SitePlan() {
    return (
        <svg className="block h-full w-full" aria-label="Site plan" fill="none">
            <g transform="translate(-441 -176)">
                {/* property lines, each one drifting by a pixel or two */}
                <path
                    d="M519 203.500H731M731 202.500H1012M1012 201.500H2400M519.500 203V271M520.500 271V495M521.500 495V626M732.500 202V347M733.500 347V573M734.500 573V625M945.500 202V253M946.500 253V478M947.500 478V624M521 626.500H648M648 625.500H934M934 624.500H2400"
                    stroke="#ff0000"
                    shapeRendering="crispEdges"
                />
                {/* building */}
                <path d="M775.500 373.500H919.500V557.500H775.500zM777.500 375.500H917.500V555.500H777.500z" stroke="#000" />
                {/* elevation markers */}
                <g stroke="#000">
                    <path d="M819.500 176.500h32v31h-32zM819.500 629.500h32v32h-32zM552.500 390.500h32v32h-32zM1092.500 390.500h33v32h-33z" />
                    <path d="M819.500 207.500l16 15 16-15M819.500 629.500l16-16 16 16M584.500 390.500l16 16-16 16M1092.500 390.500l-16 16 16 16" />
                    <path d="M835 191.500h2M834 213.500h2M835 645.500h2M835 621.500h1M567 406.500h2M589 405.500h2M1108 406.500h2M1085 405.500h2" />
                </g>
                {/* base point */}
                <circle cx="849" cy="427" r="9" stroke="#0033bb" strokeWidth="2" />
                <path d="M843 421l12 12M855 421l-12 12" stroke="#0033bb" strokeWidth="2" />
                {/* survey point */}
                <path d="M731 622L706 598" stroke="#7cc47c" strokeWidth="1.500" />
                <path d="M738 622l26-26" stroke="#ff6a6a" strokeWidth="1.500" />
                <path d="M698 590l10 5-4 4zM770 590l-5 9-4-4z" fill="#fff" stroke="#0a3fc0" strokeWidth="1.500" />
                <path d="M761 599l3-5M704 599l5 3" stroke="#0a3fc0" strokeWidth="1.500" />
                <path d="M711.500 606v-7.500h6v11l-3 3.500-3-3.500v-4M714.500 599v8" stroke="#0b86b8" strokeWidth="1.500" />
                <path d="M734 616l11 17H723z" fill="#fff" stroke="#0033bb" strokeWidth="2" />
                <path d="M734 621v9M730 626h8" stroke="#0033bb" strokeWidth="2" />
            </g>
        </svg>
    );
}

function NavButton({ label, children }: { label: string; children: ReactNode }) {
    return (
        <button type="button" aria-label={label} className="flex flex-col items-center gap-[5px]">
            {children}
            <Caret className="text-[#888]" />
        </button>
    );
}

function NavigationBar() {
    return (
        <div className="absolute top-[28px] right-0 flex h-[156px] w-[36px] flex-col items-center rounded-[5px] border-2 border-[#c0c0c0] bg-[#f5f5f5]">
            <button type="button" aria-label="Close navigation bar" className="pt-px self-end pr-[2px]">
                <Svg w={8} h={8}><circle cx="4" cy="4" r="3.500" fill="#ddd" stroke="#aaa" /><path d="M2.500 2.500l3 3M5.500 2.500l-3 3" stroke="#888" /></Svg>
            </button>
            <div className="mt-[11px]">
                <NavButton label="Steering wheel 2D">
                    <span className="relative flex h-[25px] w-[26px]">
                        <Svg w={20} h={20}>
                            <path d="M10 1h9v9a9 9 0 1 1-9-9z" fill="#eef0f5" stroke="#9a9ea5" strokeWidth="1.300" />
                            <circle cx="10" cy="10" r="4.500" fill="#fafafa" stroke="#9a9ea5" /><path d="M7 14l-3 3M13 14l2 3" stroke="#9a9ea5" />
                        </Svg>
                        <span className="absolute right-0 bottom-0 text-[10px] leading-[10px] font-bold text-[#6e9ac6]">2D</span>
                    </span>
                </NavButton>
            </div>
            <span className="mt-[3px] h-px w-[26px] bg-[#c4c4c4]" />
            <div className="mt-[7px]">
                <NavButton label="Zoom">
                    <Svg w={18} h={22}>
                        <path d="M2 2l8 9M10 2l-8 9M1 4V1h3M8 1h3v3M1 8v3h3" stroke="#8d9196" strokeWidth="1.200" />
                        <circle cx="12" cy="12" r="3.500" fill="#eef4f0" stroke="#8d9196" strokeWidth="1.300" /><path d="M15 15l3 3" stroke="#8d9196" strokeWidth="2" />
                    </Svg>
                </NavButton>
            </div>
            <div className="mt-[9px]">
                <NavButton label="Pan 2D">
                    <span className="relative flex h-[20px] w-[26px]">
                        <Svg w={24} h={10}><path d="M8 1h15l-7 8H1z" fill="#f0f0f2" stroke="#9a9ea5" strokeWidth="1.200" /></Svg>
                        <span className="absolute right-0 bottom-0 text-[10px] leading-[10px] font-bold text-[#6e9ac6]">2D</span>
                    </span>
                </NavButton>
            </div>
            <button type="button" aria-label="Navigation options" className="mt-auto self-end pr-[2px] pb-[2px]">
                <Svg w={8} h={8}><circle cx="4" cy="4" r="3.500" fill="#ddd" stroke="#aaa" /><path d="M2 4h4" stroke="#888" /></Svg>
            </button>
        </div>
    );
}

const viewControls: { label: string; icon: ReactNode }[] = [
    { label: "Detail Level", icon: <path d="M.5 2.500h15v11H.5z" fill="#fff" stroke="#2c3340" /> },
    { label: "Visual Style", icon: <path d="M1.500 7.500l5-5h8v6l-5 5h-8zM1.500 7.500h8v6M9.500 7.500l5-5" fill="#fff" stroke="#2c3340" /> },
    { label: "Sun Path", icon: <><circle cx="7" cy="7" r="4" fill="#ffe27a" stroke="#d59a10" /><path d="M7 0v2M1 7H0M2 2l1 1M12 2l-1 1M2 12l1-1" stroke="#d59a10" /><path d="M9 9l6 5M15 9l-6 5" stroke="#d01818" strokeWidth="2" /></> },
    { label: "Shadows", icon: <><circle cx="8" cy="6" r="4.500" fill="#c6e4fa" stroke="#3c8fd6" /><path d="M3 12h6" stroke="#444" strokeWidth="2" /><path d="M9 8l5 6M14 8l-5 6" stroke="#d01818" strokeWidth="2" /></> },
    { label: "Crop View", icon: <><path d="M3 13V5h11M0 12h3M6 12V8h6" stroke="#2c3340" strokeWidth="1.300" /><path d="M4 7h8" stroke="#3c9be6" strokeWidth="2" /><path d="M9 8l6 6M15 8l-6 6" stroke="#d01818" strokeWidth="2" /></> },
    { label: "Show Crop Region", icon: <><path d="M3 13V5h7M0 12h3M6 12V8h3" stroke="#2c3340" strokeWidth="1.300" /><path d="M4 7h5" stroke="#3c9be6" strokeWidth="2" /><circle cx="12.500" cy="5.500" r="3" fill="#d8eefc" stroke="#3c8fd6" /><path d="M12.500 9v5" stroke="#3c8fd6" strokeWidth="2" /></> },
    { label: "Temporary Hide/Isolate", icon: <><circle cx="5.500" cy="9.500" r="2.500" stroke="#2c3340" /><circle cx="11.500" cy="8.500" r="2.500" stroke="#2c3340" /><path d="M3 9L0 5l2-1M8 9h1M14 8V3l-4 1" stroke="#2c3340" /></> },
    { label: "Reveal Hidden", icon: <><circle cx="8" cy="7" r="3" fill="#c6e4fa" stroke="#1d66b5" /><path d="M7 10h2v3H7z" fill="#fff" stroke="#1d66b5" /></> },
    { label: "Temporary View Properties", icon: <><path d="M1.500 3.500h13v9h-13z" fill="#fff" stroke="#111" strokeDasharray="3 1" strokeWidth="1.500" /><circle cx="11" cy="10" r="3" fill="#fff" stroke="#111" strokeWidth="1.500" /><path d="M4 6h4" stroke="#111" /></> },
    { label: "Analytical Model", icon: <><path d="M1 5l4-3h8v9H1zM4 3v10M8 3v10M1 8h12" stroke="#444" /><path d="M2 6v8M7 6v8" stroke="#d01818" strokeWidth="1.500" /><circle cx="13" cy="6" r="3" fill="#ffd46a" stroke="#e08a10" /><path d="M13 9v4" stroke="#666" strokeWidth="2" /></> },
];

function ResizeGrip({ className }: { className?: string }) {
    return (
        <Svg w={9} h={10} className={className}>
            <path d="M6 1h2v2H6zM3 4h2v2H3zM6 4h2v2H6zM0 7h2v2H0zM3 7h2v2H3zM6 7h2v2H6z" fill="#b5b5b5" />
        </Svg>
    );
}

function ViewControlBar() {
    return (
        <div className="flex h-[21px] shrink-0 items-center bg-[#f0f0f0]">
            <span className="w-[78px] pl-[21px] whitespace-nowrap">1 : 240</span>
            <div className="flex gap-[5px] pb-px">
                {viewControls.map((item) => (
                    <button key={item.label} type="button" aria-label={item.label}>
                        <Svg>{item.icon}</Svg>
                    </button>
                ))}
            </div>
            <div className="ml-[3px] flex h-[18px] min-w-0 flex-1 items-center bg-[#ececec]">
                <button type="button" aria-label="Scroll left" className="flex h-full w-[16px] items-center justify-center bg-[#f2f2f2]">
                    <Svg w={4} h={7}><path d="M4 0v7L0 3.500z" fill="#333" /></Svg>
                </button>
                <span className="flex-1" />
                <span className="h-[15px] w-[15px] rounded-[2px] border border-[#999] bg-linear-to-b from-[#f3f3f3] to-[#d0d0d0]" />
                <span className="flex-1" />
                <button type="button" aria-label="Scroll right" className="flex h-full w-[16px] items-center justify-center bg-[#f2f2f2]">
                    <Svg w={4} h={7}><path d="M0 0v7l4-3.500z" fill="#333" /></Svg>
                </button>
            </div>
            <ResizeGrip className="mr-[4px] ml-[6px] self-end" />
        </div>
    );
}

function DrawingArea() {
    return (
        <main className="flex min-w-0 flex-1 flex-col border-t-2 border-l-2 border-[#6e6e6e] bg-[#f0f0f0]">
            <div className="flex min-h-0 flex-1 bg-white">
                <div className="relative min-w-0 flex-1 overflow-hidden">
                    <SitePlan />
                    <div className="absolute top-[390px] left-[336px] font-['Liberation_Sans',Arial,sans-serif] text-[11px] leading-[12px] whitespace-pre text-[#555]">
                        <p className="text-[#0033bb]">Survey Point - Internal</p>
                        <p>Shared Site:</p>
                        <p>{"N/S   30.9031"}</p>
                        <p>{"E/W   384.3802"}</p>
                        <p>{"Elev   0.0000"}</p>
                    </div>
                    <div className="absolute top-[8px] right-[3px] flex items-center gap-[6px]">
                        <button type="button" aria-label="Minimize view"><Svg w={12} h={12}><path d="M.5 6.500h11v4H.5z" fill="#fff" stroke="#444" /></Svg></button>
                        <button type="button" aria-label="Restore view"><Svg w={12} h={12}><path d="M3.500.5h8v8h-8z" fill="#fff" stroke="#444" /><path d="M.5 2.500h8v9h-8z" fill="#fff" stroke="#444" /><path d="M3 5.500h3v3H3z" stroke="#444" /></Svg></button>
                        <button type="button" aria-label="Close view"><Svg w={12} h={12}><path d="M1 1h3l2 2.500L8 1h3L8 6l3 5H8L6 8.500 4 11H1l3-5z" fill="#fff" stroke="#444" strokeWidth="1.200" /></Svg></button>
                    </div>
                    <NavigationBar />
                </div>
                <div className="flex w-[19px] shrink-0 flex-col items-center bg-[#ececec] pr-[3px]">
                    <button type="button" aria-label="Scroll up" className="flex h-[17px] w-full items-center justify-center">
                        <Svg w={7} h={4}><path d="M0 4h7L3.500 0z" fill="#333" /></Svg>
                    </button>
                    <div className="grow-[3]" />
                    <div className="h-[15px] w-[15px] rounded-[2px] border border-[#999] bg-linear-to-r from-[#f3f3f3] to-[#d0d0d0]" />
                    <div className="grow-[4]" />
                    <button type="button" aria-label="Scroll down" className="flex h-[17px] w-full items-center justify-center">
                        <Svg w={7} h={4}><path d="M0 0h7L3.500 4z" fill="#333" /></Svg>
                    </button>
                </div>
            </div>
            <ViewControlBar />
        </main>
    );
}

/* ---------- Status bar ---------- */

function StatusBar() {
    return (
        <footer className="flex h-[25px] shrink-0 items-center border-t border-[#777] bg-linear-to-b from-[#ececec] to-[#b4b4b4] text-black">
            <p className="w-[488px] shrink-0 pl-[2px] whitespace-nowrap">Click to select, TAB for alternates, CTRL adds, SHIFT unselects.</p>
            <button type="button" aria-label="Worksets" className="flex h-[21px] w-[24px] items-center justify-center bg-[#cfcfcf]">
                <Svg w={18} h={16}>
                    <path d="M5 5V3l2-2h5v4l-2 2v3H7" fill="#e4f3dc" stroke="#2f7d1e" strokeWidth="1.500" />
                    <path d="M1 9l2-2h5v6l-2 2H1zM1 9h5v6M6 9l2-2" fill="#d6ecfb" stroke="#1d7ec4" strokeWidth="1.300" />
                    <path d="M11.500 8v7M15.500 7v8" stroke="#444" strokeWidth="3" /><path d="M11.500 8v6M15.500 8v6" stroke="#fff" />
                </Svg>
            </button>
            <div className="relative ml-[3px]">
                <select aria-label="Active workset" className="block h-[21px] w-[205px] appearance-none bg-white px-[3px]" />
                <Svg w={7} h={4} className="pointer-events-none absolute top-[9px] right-[4px]"><path d="M0 0h7L3.500 4z" fill="#999" /></Svg>
            </div>
            <button type="button" className="ml-[4px] flex h-[21px] w-[52px] items-center gap-[5px] bg-[#cfcfcf] pl-[4px]">
                <Svg><path d="M5.500 1.500h9v4l-4 3v-3h-5z" fill="#f0f0f0" stroke="#909090" /><path d="M4 5l3 3-1 4 2 3H0l3-4z" fill="#8a8a8a" /></Svg>
                :0
            </button>
            <button type="button" aria-label="Design options" className="ml-[2px] flex h-[21px] w-[24px] items-center justify-center bg-[#cfcfcf]">
                <Svg w={17} h={16}>
                    <path d="M.5.5h15v14H.5z" fill="#f4f4f4" stroke="#333" /><path d="M1 2h15" stroke="#333" strokeWidth="2" />
                    <path d="M3 6h3M5 9h3M5 12h3" stroke="#333" strokeWidth="2" /><path d="M8 6h5M10 9h4M10 12h4" stroke="#333" />
                </Svg>
            </button>
            <button type="button" aria-label="Add to set" className="ml-[2px] flex h-[21px] w-[24px] items-center justify-center bg-[#cfcfcf]">
                <Svg><path d="M1 1h14v14H1z" fill="#9a9a9a" /><path d="M0 11h7" stroke="#eee" strokeWidth="2" /><path d="M6 7l5 4-5 4z" fill="#eee" /></Svg>
            </button>
            <div className="relative ml-[3px]">
                <select aria-label="Design option" className="block h-[21px] w-[156px] appearance-none bg-white px-[3px] text-[#888]">
                    <option>Main Model</option>
                </select>
                <Svg w={7} h={4} className="pointer-events-none absolute top-[9px] right-[4px]"><path d="M0 0h7L3.500 4z" fill="#999" /></Svg>
            </div>
            <span className="flex-1" />
            <span className="h-[22px] w-[3px] bg-[#bcbcbc]" />
            <ResizeGrip className="mr-[3px] ml-[6px] self-end" />
        </footer>
    );
}

export default function App() {
    return (
        <div className="h-screen overflow-hidden bg-[#8a8f96] font-[Roboto,sans-serif] text-[12px]">
            <div className="relative flex h-full flex-col rounded-[7px] border border-[#17202b] bg-[linear-gradient(180deg,#b9d8f8_0%,#d3e3f5_8%,#e0eaf6_27%,#9cc3eb_28%,#a9cdf0_60%,#bddcfb_100%)] px-[7px] pb-[6px] shadow-[inset_0_0_0_1px_#e8f2fc]">
                <span className="absolute top-[16px] left-[-1px] z-30 flex h-[16px] w-[9px] items-center rounded-r-[2px] border border-l-0 border-[#777] bg-[#f4f4f4] text-[11px] shadow-[1px_2px_2px_rgba(0,0,0,0.5)]">F</span>
                <header className="grid grid-cols-[40px_1fr] grid-rows-[30px_21px]">
                    <button type="button" aria-label="Application menu" className="z-10 col-start-1 row-span-2 row-start-1 mt-[7px] flex h-[41px] items-center justify-center gap-[3px] border border-[#222] bg-linear-to-b from-[#b5b5b5] to-[#6f6f6f]">
                        <RevitLogo />
                        <Svg w={7} h={4}><path d="M0 0h7L3.500 4z" fill="#222" /></Svg>
                    </button>
                    <div className="col-start-2 row-start-1 flex items-start">
                        <QuickAccess />
                        <h1 className="min-w-0 flex-1 truncate pt-[6px] pl-[18px] text-black">SurveyPt.rvt - Floor ...</h1>
                        <InfoCenter />
                        <div className="w-[21px] shrink-0" />
                        <WindowButtons />
                    </div>
                    <RibbonTabs />
                </header>
                <div className="flex min-h-0 flex-1 flex-col bg-[#f0f0f0] shadow-[0_0_0_1px_#5d6a7a]">
                    <Ribbon />
                    <div className="flex h-[27px] shrink-0 items-center bg-[#d9e3d2] pt-[2px] pl-[9px] text-black">Modify | Survey Point</div>
                    <div className="flex min-h-0 flex-1">
                        <div className="mr-[5px] flex w-[426px] shrink-0 flex-col">
                            <PropertiesPalette />
                            <ProjectBrowser />
                        </div>
                        <DrawingArea />
                    </div>
                    <StatusBar />
                </div>
            </div>
        </div>
    );
}
